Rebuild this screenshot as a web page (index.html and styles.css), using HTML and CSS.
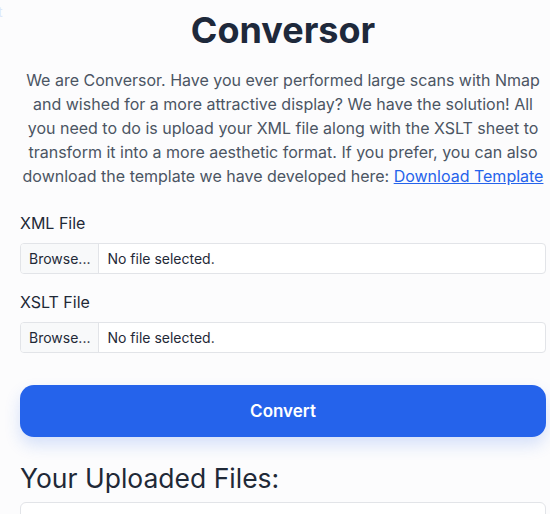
FILE: index.html
```html
<!DOCTYPE html>
<html lang="en">
<head>
<meta charset="utf-8">
<title>Conversor</title>
<link rel="stylesheet" href="styles.css">
</head>
<body>
<span class="ghost">t</span>
<main class="page">
  <h1 class="title">Conversor</h1>
  <p class="intro">We are Conversor. Have you ever performed large scans with Nmap and wished for a more attractive display? We have the solution! All you need to do is upload your XML file along with the XSLT sheet to transform it into a more aesthetic format. If you prefer, you can also download the template we have developed here: <a class="link" href="#">Download Template</a></p>
  <form class="form">
    <div class="field">
      <label class="label">XML File</label>
      <div class="file"><span class="browse">Browse...</span><span class="fname">No file selected.</span></div>
    </div>
    <div class="field">
      <label class="label">XSLT File</label>
      <div class="file"><span class="browse">Browse...</span><span class="fname">No file selected.</span></div>
    </div>
    <button type="button" class="convert">Convert</button>
  </form>
  <h2 class="uploaded">Your Uploaded Files:</h2>
  <div class="list"></div>
</main>
</body>
</html>
```
FILE: styles.css
```css
* { box-sizing: border-box; }
html, body { margin: 0; padding: 0; }
body {
  background: #fcfcfd;
  font-family: Inter, "Noto Sans", sans-serif;
  color: #1f2937;
  overflow: hidden;
  height: 514px;
  position: relative;
}
.ghost {
  position: absolute;
  left: -2px;
  top: 3px;
  font-size: 14px;
  line-height: 18px;
  color: #dbe7fb;
}
.page {
  padding: 0 4px 0 20px;
}
.title {
  margin: 0;
  padding-top: 8px;
  text-align: center;
  font-size: 36px;
  line-height: 44px;
  font-weight: 700;
  color: #1e293b;
}
.intro {
  margin: 16px 0 0;
  text-align: center;
  font-size: 16px;
  line-height: 24px;
  color: #4b5563;
}
.link { color: #2563eb; text-decoration: underline; }
.form { margin-top: 23px; }
.field { margin-bottom: 16px; }
.label {
  display: block;
  font-size: 16px;
  line-height: 24px;
  margin-bottom: 8px;
  color: #1f2937;
}
.file {
  display: flex;
  height: 31px;
  border: 1px solid #e2e4e8;
  border-radius: 4px;
  background: #fff;
  font-size: 14px;
  overflow: hidden;
}
.browse {
  display: flex;
  align-items: center;
  padding: 0 8px;
  background: #f8f9fa;
  border-right: 1px solid #e2e4e8;
  color: #1f2937;
}
.fname {
  display: flex;
  align-items: center;
  padding: 0 8px;
  color: #1f2937;
}
.convert {
  display: block;
  width: 100%;
  height: 52px;
  margin-top: 32px;
  border: 0;
  border-radius: 14px;
  background: #2563eb;
  color: #fff;
  font-family: Inter, sans-serif;
  font-size: 17px;
  font-weight: 600;
  box-shadow: 0 8px 16px rgba(37, 99, 235, 0.18);
}
.uploaded {
  margin: 25px 0 0;
  font-size: 26.5px;
  line-height: 32px;
  font-weight: 400;
  color: #1f2937;
}
.list {
  margin-top: 8px;
  height: 60px;
  border: 1px solid #e2e4e8;
  border-radius: 6px;
  background: #fff;
}
```
